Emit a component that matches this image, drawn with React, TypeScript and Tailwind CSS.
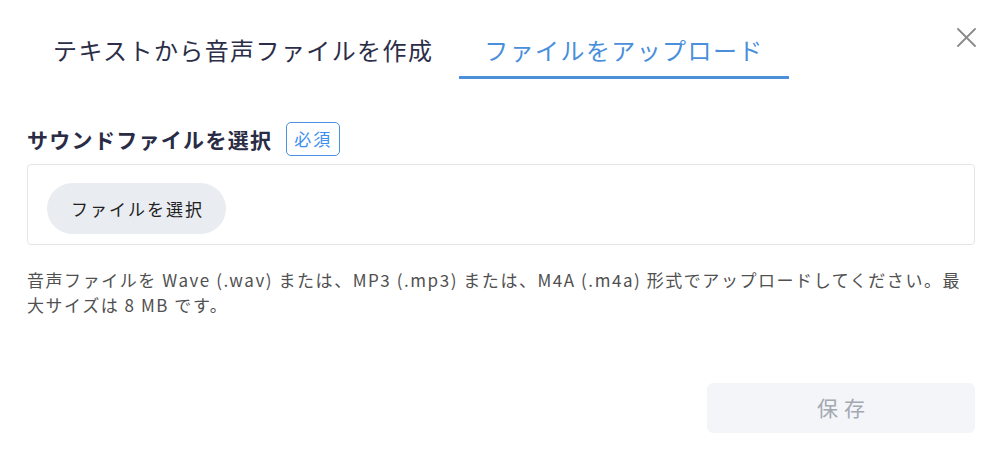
import React from "react";

export default function App() {
  return (
    <div className="relative w-[1002px] h-[456px] bg-white px-[27px] font-['Noto_Sans_CJK_JP','Noto_Sans',sans-serif] overflow-hidden">
      <button className="absolute right-[26px] top-[28px] w-[19px] h-[19px] text-[#8a8a8a]" aria-label="close">
        <svg viewBox="0 0 19 19" width="19" height="19" fill="none" stroke="currentColor" strokeWidth="1.8" strokeLinecap="round">
          <path d="M1 1L18 18M18 1L1 18" />
        </svg>
      </button>

      <div className="flex mt-[32px]">
        <div className="pl-[26px] pr-[26px] pb-[8px] border-b-[3px] border-transparent text-[24px] leading-[36px] tracking-[1.4px] text-[#2c2e48]">
          テキストから音声ファイルを作成
        </div>
        <div className="pl-[25px] pr-[25px] pb-[8px] border-b-[3px] border-[#4b8fd9] text-[24px] leading-[36px] tracking-[1.4px] text-[#4a8fdb]">
          ファイルをアップロード
        </div>
      </div>

      <div className="flex items-center mt-[43px] h-[34px]">
        <span className="text-[21px] font-bold tracking-[1.3px] text-[#2a2c45] leading-[34px]">
          サウンドファイルを選択
        </span>
        <span className="ml-[14px] h-[34px] px-[7px] border border-[#4a90e2] rounded-[5px] text-[17px] tracking-[2px] leading-[32px] text-[#3d8ef0]">
          必須
        </span>
      </div>

      <div className="mt-[8px] h-[81px] border border-[#e3e5e9] rounded-[4px] pl-[19px] pt-[18px]">
        <button className="h-[51px] w-[179px] rounded-full bg-[#e9ecf0] text-[17px] tracking-[2px] text-[#222222] pl-[2px]">
          ファイルを選択
        </button>
      </div>

      <p className="mt-[22px] text-[17px] leading-[25px] tracking-[1.55px] text-[#505050]">
        音声ファイルを Wave (.wav) または、MP3 (.mp3) または、M4A (.m4a) 形式でアップロードしてください。最大サイズは 8 MB です。
      </p>

      <div className="flex justify-end mt-[66px]">
        <button className="w-[268px] h-[50px] rounded-[6px] bg-[#f4f5f9] text-[21px] tracking-[6px] pl-[6px] text-[#a3a8b1]">
          保存
        </button>
      </div>
    </div>
  );
}
